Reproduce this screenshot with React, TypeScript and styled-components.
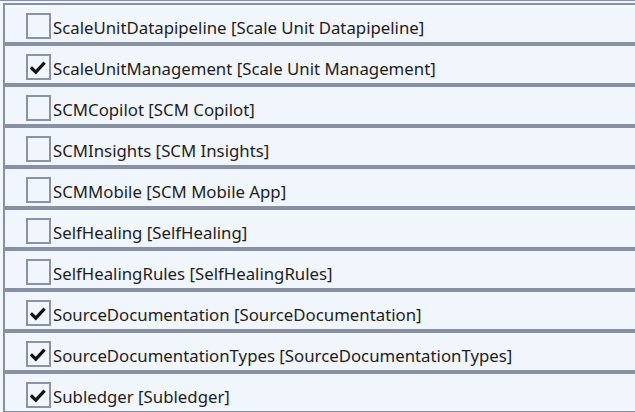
import styled, { createGlobalStyle } from "styled-components";

const GlobalStyle = createGlobalStyle`
  body {
    margin: 0;
    background: #f1f5fc;
    font-family: "Noto Sans", "Open Sans", sans-serif;
  }
`;

const Page = styled.div`
  width: 635px;
  height: 412px;
  overflow: hidden;
  border-top: 1px solid #8891a3;
  padding: 2px 0 0 3px;
  box-sizing: border-box;
`;

const List = styled.ul`
  list-style: none;
  margin: 0;
  padding: 0;
  border-left: 2px solid #8891a3;
  border-top: 2px solid #8891a3;
`;

const Row = styled.li`
  display: flex;
  align-items: flex-start;
  height: 29px;
  padding: 8px 0 0 21px;
  border-bottom: 4px solid #8891a3;
`;

const Box = styled.span`
  display: flex;
  align-items: center;
  justify-content: flex-start;
  width: 25px;
  height: 26px;
  padding: 2px 0 0 2px;
  box-sizing: border-box;
  border: 2px solid #8a93a3;
  background: #f1f5fc;
  flex-shrink: 0;
`;

const Label = styled.span`
  margin: 2px 0 0 2px;
  font-size: 16.8px;
  line-height: 26px;
  color: #1e1e1e;
  white-space: nowrap;
`;

const Check = () => (
  <svg width="16" height="16" viewBox="0 0 16 16">
    <path
      d="M2 8.5 L5.8 12.2 L13.5 3.8"
      fill="none"
      stroke="#111"
      strokeWidth="3.2"
      strokeLinecap="square"
    />
  </svg>
);

const items = [
  { name: "ScaleUnitDatapipeline [Scale Unit Datapipeline]", checked: false },
  { name: "ScaleUnitManagement [Scale Unit Management]", checked: true },
  { name: "SCMCopilot [SCM Copilot]", checked: false },
  { name: "SCMInsights [SCM Insights]", checked: false },
  { name: "SCMMobile [SCM Mobile App]", checked: false },
  { name: "SelfHealing [SelfHealing]", checked: false },
  { name: "SelfHealingRules [SelfHealingRules]", checked: false },
  { name: "SourceDocumentation [SourceDocumentation]", checked: true },
  { name: "SourceDocumentationTypes [SourceDocumentationTypes]", checked: true },
  { name: "Subledger [Subledger]", checked: true },
];

export default function App() {
  return (
    <>
      <GlobalStyle />
      <Page>
        <List>
          {items.map((item) => (
            <Row key={item.name}>
              <Box>{item.checked && <Check />}</Box>
              <Label>{item.name}</Label>
            </Row>
          ))}
        </List>
      </Page>
    </>
  );
}
